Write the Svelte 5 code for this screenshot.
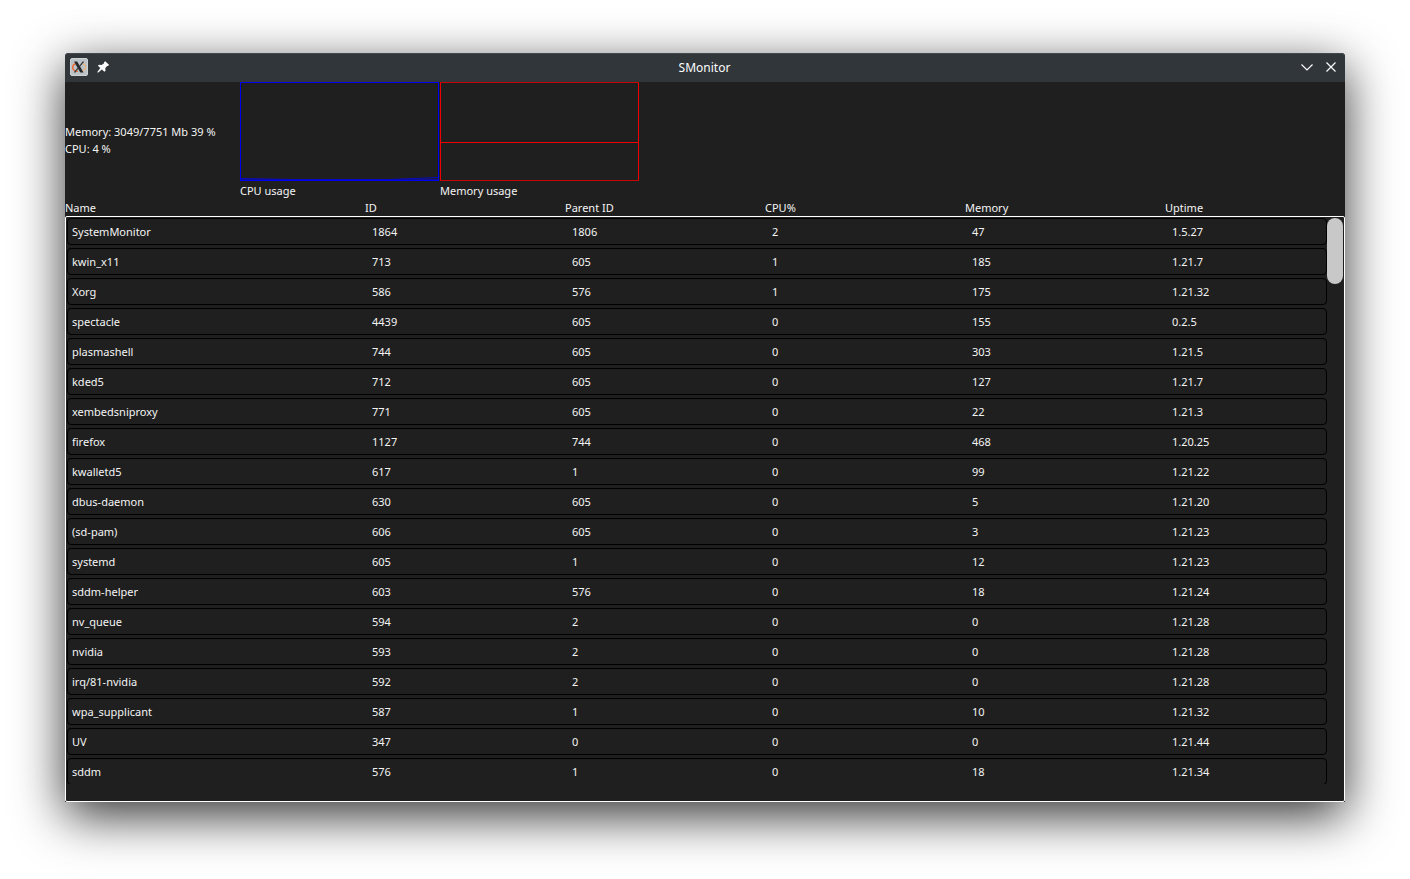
<script>
  const columns = ['Name', 'ID', 'Parent ID', 'CPU%', 'Memory', 'Uptime'];

  const processes = [
    ['SystemMonitor', 1864, 1806, 2, 47, '1.5.27'],
    ['kwin_x11', 713, 605, 1, 185, '1.21.7'],
    ['Xorg', 586, 576, 1, 175, '1.21.32'],
    ['spectacle', 4439, 605, 0, 155, '0.2.5'],
    ['plasmashell', 744, 605, 0, 303, '1.21.5'],
    ['kded5', 712, 605, 0, 127, '1.21.7'],
    ['xembedsniproxy', 771, 605, 0, 22, '1.21.3'],
    ['firefox', 1127, 744, 0, 468, '1.20.25'],
    ['kwalletd5', 617, 1, 0, 99, '1.21.22'],
    ['dbus-daemon', 630, 605, 0, 5, '1.21.20'],
    ['(sd-pam)', 606, 605, 0, 3, '1.21.23'],
    ['systemd', 605, 1, 0, 12, '1.21.23'],
    ['sddm-helper', 603, 576, 0, 18, '1.21.24'],
    ['nv_queue', 594, 2, 0, 0, '1.21.28'],
    ['nvidia', 593, 2, 0, 0, '1.21.28'],
    ['irq/81-nvidia', 592, 2, 0, 0, '1.21.28'],
    ['wpa_supplicant', 587, 1, 0, 10, '1.21.32'],
    ['UV', 347, 0, 0, 0, '1.21.44'],
    ['sddm', 576, 1, 0, 18, '1.21.34']
  ];
</script>

<div class="desktop">
  <main class="window">
    <header class="titlebar">
      <div class="tools">
        <svg class="app-icon" viewBox="0 0 18 18" aria-hidden="true">
          <rect x="0.5" y="0.5" width="17" height="17" rx="1.5" fill="#bcc3c8" stroke="#ccd1d4" />
          <path d="M6.500 5.400C3.600 6 2.200 8 2.700 10.200c.5 2 2.800 3.200 5.200 3.100" fill="none" stroke="#ee6a35" stroke-width="1.500" />
          <path d="M11.500 5.500c3 .3 4.500 2.300 4 4.500-.4 1.700-1.900 2.700-3.500 3" fill="none" stroke="#e6b684" stroke-width="1.300" />
          <path d="M4 3.500h3.200l6.300 11h-3.200z" fill="#26292c" />
          <path d="M13.500 3.500L9.700 8.200M8 10.200L4.500 14.500" fill="none" stroke="#3b3f43" stroke-width="1.300" />
        </svg>
        <button class="icon-button" aria-label="Keep window above">
          <svg viewBox="0 0 16 16" aria-hidden="true">
            <path d="M10.200 2.300l3.800 3.500-.8 1.200-1-.1-1.900 2.200.2 2.700-1.100 1-2.500-2.200L3 13.700l-.7-.6 3-4L2.900 6.800 4 5.700l2.600.2 2.500-1.700-.1-1z" fill="#fcfcfc" />
          </svg>
        </button>
      </div>
      <h1>SMonitor</h1>
      <div class="tools end">
        <button class="icon-button" aria-label="Minimize">
          <svg viewBox="0 0 16 16" aria-hidden="true">
            <path d="M2.500 5.500L8 11l5.500-5.500" fill="none" stroke="#fcfcfc" stroke-width="1.200" />
          </svg>
        </button>
        <button class="icon-button" aria-label="Close">
          <svg viewBox="0 0 16 16" aria-hidden="true">
            <path d="M3.500 3.500l9 9M12.500 3.500l-9 9" fill="none" stroke="#fcfcfc" stroke-width="1.200" />
          </svg>
        </button>
      </div>
    </header>

    <section class="summary">
      <div class="totals">
        <div>Memory: 3049/7751 Mb 39 %</div>
        <div>CPU: 4 %</div>
      </div>
      <figure>
        <svg class="chart" viewBox="0 0 200 100" aria-hidden="true">
          <path d="M0 97H199V98H0z" fill="#10108c" />
          <path d="M0 96.500L50 97.500H150L199 95.500" fill="none" stroke="#0808c8" />
          <rect x="0.5" y="0.5" width="198" height="98" fill="none" stroke="#0000f0" />
        </svg>
        <figcaption>CPU usage</figcaption>
      </figure>
      <figure>
        <svg class="chart" viewBox="0 0 200 100" aria-hidden="true">
          <path d="M0.500 0V99M198.500 0V99M0 60.500H199" fill="none" stroke="#f00000" />
          <path d="M0 98.500H199" fill="none" stroke="#c80404" />
          <path d="M0 0.500H199" fill="none" stroke="#c80404" />
        </svg>
        <figcaption>Memory usage</figcaption>
      </figure>
    </section>

    <section class="processes">
      <table>
        <thead>
          <tr>
            {#each columns as column}
              <th scope="col">{column}</th>
            {/each}
          </tr>
        </thead>
        <tbody>
          {#each processes as process}
            <tr>
              {#each process as value}
                <td>{value}</td>
              {/each}
            </tr>
          {/each}
        </tbody>
      </table>
      <div class="scroll-thumb"></div>
    </section>
  </main>
</div>

<style>
  :global(body) {
    margin: 0;
    background: #fff;
  }

  .desktop {
    box-sizing: border-box;
    height: 100vh;
    padding: 53px 65px 77px;
    display: flex;
    overflow: hidden;
    font: 11px/17px 'Noto Sans', sans-serif;
    color: #f4f4f4;
  }

  .window {
    flex: 1;
    min-width: 0;
    display: flex;
    flex-direction: column;
    background: #1f1f1f;
    border-radius: 4px 4px 0 0;
    box-shadow: 0 14px 50px rgba(0, 0, 0, 0.8);
  }

  .titlebar {
    box-sizing: border-box;
    height: 29px;
    padding: 0 6px 1px 5px;
    display: grid;
    grid-template-columns: 1fr auto 1fr;
    align-items: center;
    background: #31363b;
    box-shadow: inset 0 1px #42484d;
    border-radius: 4px 4px 0 0;
  }

  h1 {
    margin: 0;
    font-size: 12px;
    line-height: 17px;
    font-weight: 400;
    color: #fcfcfc;
  }

  .tools {
    display: flex;
    align-items: center;
    gap: 7px;
  }

  .end {
    justify-content: flex-end;
    gap: 8px;
  }

  .app-icon {
    width: 18px;
    height: 18px;
  }

  .icon-button {
    display: block;
    width: 16px;
    height: 16px;
    padding: 0;
    border: 0;
    background: none;
  }

  .icon-button svg {
    display: block;
    width: 16px;
    height: 16px;
  }

  .summary {
    display: grid;
    grid-template-columns: 175px 200px 200px;
    align-items: center;
  }

  .totals {
    padding-bottom: 2px;
    white-space: nowrap;
  }

  figure {
    margin: 0;
  }

  .chart {
    display: block;
    width: 200px;
    height: 100px;
  }

  .processes {
    flex: 1;
    min-height: 0;
    position: relative;
    display: flex;
  }

  .processes::after {
    content: '';
    position: absolute;
    inset: 17px 0 0;
    border: 1px solid #fff;
    border-radius: 2px;
    pointer-events: none;
  }

  table {
    flex: 1;
    min-width: 0;
    display: flex;
    flex-direction: column;
  }

  thead {
    display: block;
  }

  tbody {
    display: flex;
    flex-direction: column;
    gap: 3px;
    flex: 1;
    min-height: 0;
    margin: 2px 18px 18px 2px;
    overflow-y: auto;
    scrollbar-width: none;
  }

  tr {
    display: grid;
    grid-template-columns: 300px repeat(4, 200px) 1fr;
  }

  th,
  td {
    padding: 0;
    text-align: left;
    font-weight: 400;
    white-space: nowrap;
  }

  tbody tr {
    flex: none;
    padding: 4px;
    border: 1px solid #000;
    border-radius: 4px;
  }

  .scroll-thumb {
    position: absolute;
    top: 19px;
    right: 2px;
    width: 16px;
    height: 66px;
    border-radius: 8px;
    background: #c8c8c8;
  }
</style>
